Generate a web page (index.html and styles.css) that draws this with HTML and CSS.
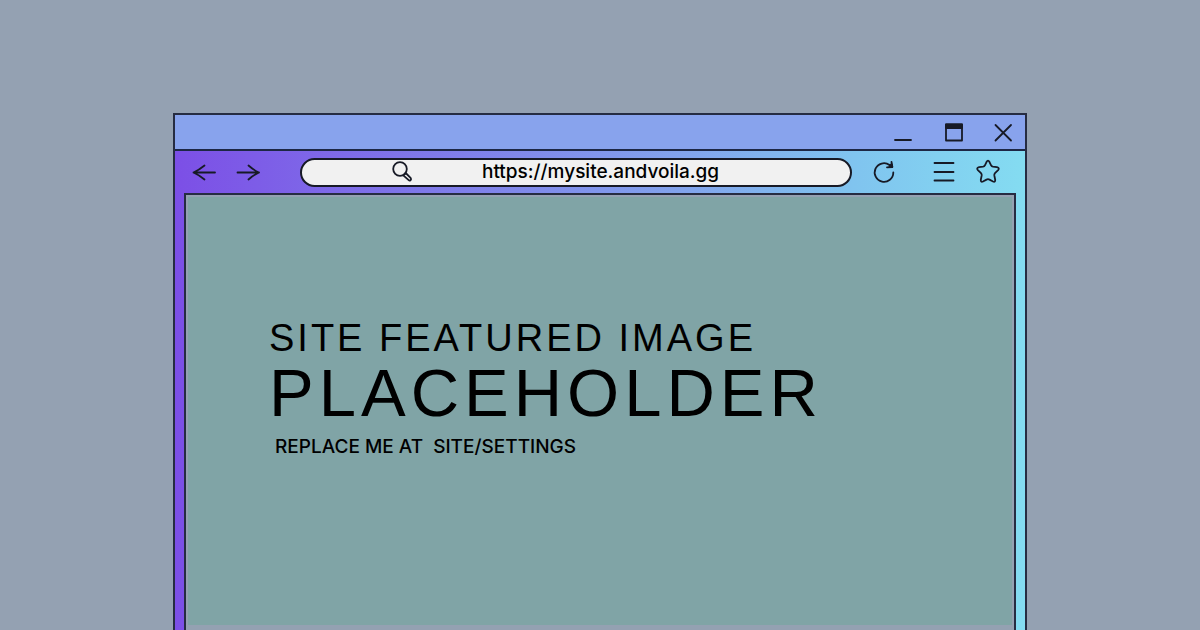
FILE: index.html
```html
<!DOCTYPE html>
<html lang="en">
<head>
<meta charset="utf-8">
<meta name="viewport" content="width=device-width, initial-scale=1">
<title>Site featured image</title>
<link rel="stylesheet" href="styles.css">
</head>
<body>
<div class="window">
  <header class="titlebar">
    <button class="icon-button" type="button" aria-label="Minimize">
      <svg viewBox="0 0 24 24"><path d="M4 20H20"/></svg>
    </button>
    <button class="icon-button" type="button" aria-label="Maximize">
      <svg viewBox="0 0 24 24"><path d="M5 4.500H21V20.500H5Z"/><path class="solid" d="M5 4.500H21V8H5Z"/></svg>
    </button>
    <button class="icon-button" type="button" aria-label="Close">
      <svg viewBox="0 0 24 24"><path d="M4.500 5L20 20.500M20 5L4.500 20.500"/></svg>
    </button>
  </header>
  <div class="chrome">
    <nav class="toolbar" aria-label="Browser">
      <div class="group">
        <button class="icon-button" type="button" aria-label="Back">
          <svg viewBox="0 0 24 24"><path d="M23 12.500H1.500M12.500 5.500Q7 10 1.500 12.500Q7 15 12.500 19.500"/></svg>
        </button>
        <button class="icon-button" type="button" aria-label="Forward">
          <svg viewBox="0 0 24 24"><path d="M1.500 12.500H23M12.500 5.500Q17.500 10 23 12.500Q17.500 15 12.500 19.500"/></svg>
        </button>
      </div>
      <label class="address">
        <svg class="search" viewBox="0 0 24 24"><circle cx="10" cy="9" r="6.800"/><path d="M13.300 15.300L15.700 13L20.800 18.200Q21.500 19.200 20.500 20.300Q19.500 21 18.700 20.200Z"/></svg>
        <input class="url" type="text" aria-label="Address" value="https://mysite.andvoila.gg">
      </label>
      <button class="icon-button reload" type="button" aria-label="Reload">
        <svg viewBox="0 0 24 24"><path d="M21.300 12.500A9.300 9.300 0 1 1 17.500 5M19.500 2L20.300 7L15 7.300"/><path class="solid" d="M17.800 5L19.900 4.500L20.300 7L17.500 7.200Z"/></svg>
      </button>
      <div class="group">
        <button class="icon-button" type="button" aria-label="Menu">
          <svg viewBox="0 0 24 24"><path d="M2.500 3H21.500M2.500 12H21.500M2.500 20.500H21.500"/></svg>
        </button>
        <button class="icon-button" type="button" aria-label="Bookmark">
          <svg viewBox="0 0 24 24"><path d="M10.600 1.800Q12 -.600 13.400 1.800L15.100 5.300Q15.700 6.500 17 6.700L20.900 7.100Q24 8 22.100 10.200L19 13.200Q18.100 14.200 18.300 15.400L19.200 19.800Q19.400 22.500 17 21.500L13.500 19.600Q12 18.800 10.500 19.600L7 21.500Q4.600 22.500 4.800 19.800L5.700 15.400Q5.900 14.200 5 13.200L1.900 10.200Q0 8 3.100 7.100L7 6.700Q8.300 6.500 8.900 5.300Z"/></svg>
        </button>
      </div>
    </nav>
    <main class="page">
      <section class="hero">
        <h1 class="heading">
          <span class="line">SITE FEATURED IMAGE</span>
          <span class="line large">PLACEHOLDER</span>
        </h1>
        <p class="note">REPLACE ME AT&nbsp; SITE/SETTINGS</p>
      </section>
    </main>
  </div>
</div>
</body>
</html>
```
FILE: styles.css
```css
* {
  box-sizing: border-box;
}

body {
  margin: 0;
  height: 100vh;
  padding: 113px calc(14% + 5px) 0;
  overflow: hidden;
  background: #94a1b2;
  color: #000;
  font-family: Inter, "Liberation Sans", sans-serif;
  display: flex;
}

.window {
  flex: 1;
  display: flex;
  flex-direction: column;
  border: 2px solid #262c42;
  border-bottom: 0;
}

.titlebar {
  display: flex;
  justify-content: flex-end;
  align-items: center;
  gap: 26px;
  height: 36px;
  padding-right: 10px;
  background: #88a3ed;
  border-bottom: 2px solid #1d2745;
}

.icon-button {
  display: block;
  width: 24px;
  height: 24px;
  padding: 0;
  border: 0;
  background: none;
}

svg {
  display: block;
  width: 24px;
  height: 24px;
  overflow: visible;
  fill: none;
  stroke: #171a26;
  stroke-width: 1.8;
  stroke-linecap: round;
  stroke-linejoin: round;
}

.solid {
  fill: #171a26;
}

.chrome {
  flex: 1;
  display: flex;
  flex-direction: column;
  padding: 0 9px;
  background: linear-gradient(90deg, #7c4fe6, #82a4ed 60%, #80c4ef 80%, #84dcf1);
}

.toolbar {
  display: flex;
  align-items: center;
  height: 42px;
  padding: 0 16px 0 8px;
}

.group {
  display: flex;
  gap: 20px;
}

.address {
  flex: 1;
  display: flex;
  align-items: center;
  gap: 68px;
  height: 29px;
  margin: 0 20px 0 40px;
  padding-left: 88px;
  border: 2px solid #171a26;
  border-radius: 15px;
  background: #f1f1f1;
}

.search {
  flex: none;
}

.url {
  flex: 1;
  min-width: 0;
  padding: 0;
  border: 0;
  outline: 0;
  background: none;
  color: #000;
  font: 500 19px/24px Inter, sans-serif;
}

.reload {
  margin-right: 36px;
}

.page {
  flex: 1;
  display: flex;
  padding: 2px 2px 5px;
  border: 2px solid #262c42;
  border-bottom: 0;
  background: #94a1b2;
}

.hero {
  flex: 1;
  padding: 119px 80px 0 81px;
  background: #80a4a6;
}

.heading {
  margin: 0;
  font-family: "Liberation Sans", Arial, sans-serif;
  font-weight: 400;
}

.line {
  display: block;
  font-size: 38px;
  line-height: 44px;
  letter-spacing: 3px;
}

.large {
  font-size: 67px;
  line-height: 66px;
  letter-spacing: 5px;
}

.note {
  margin: 9px 0 0 6px;
  font-size: 19px;
  line-height: 24px;
  font-weight: 500;
}
```
